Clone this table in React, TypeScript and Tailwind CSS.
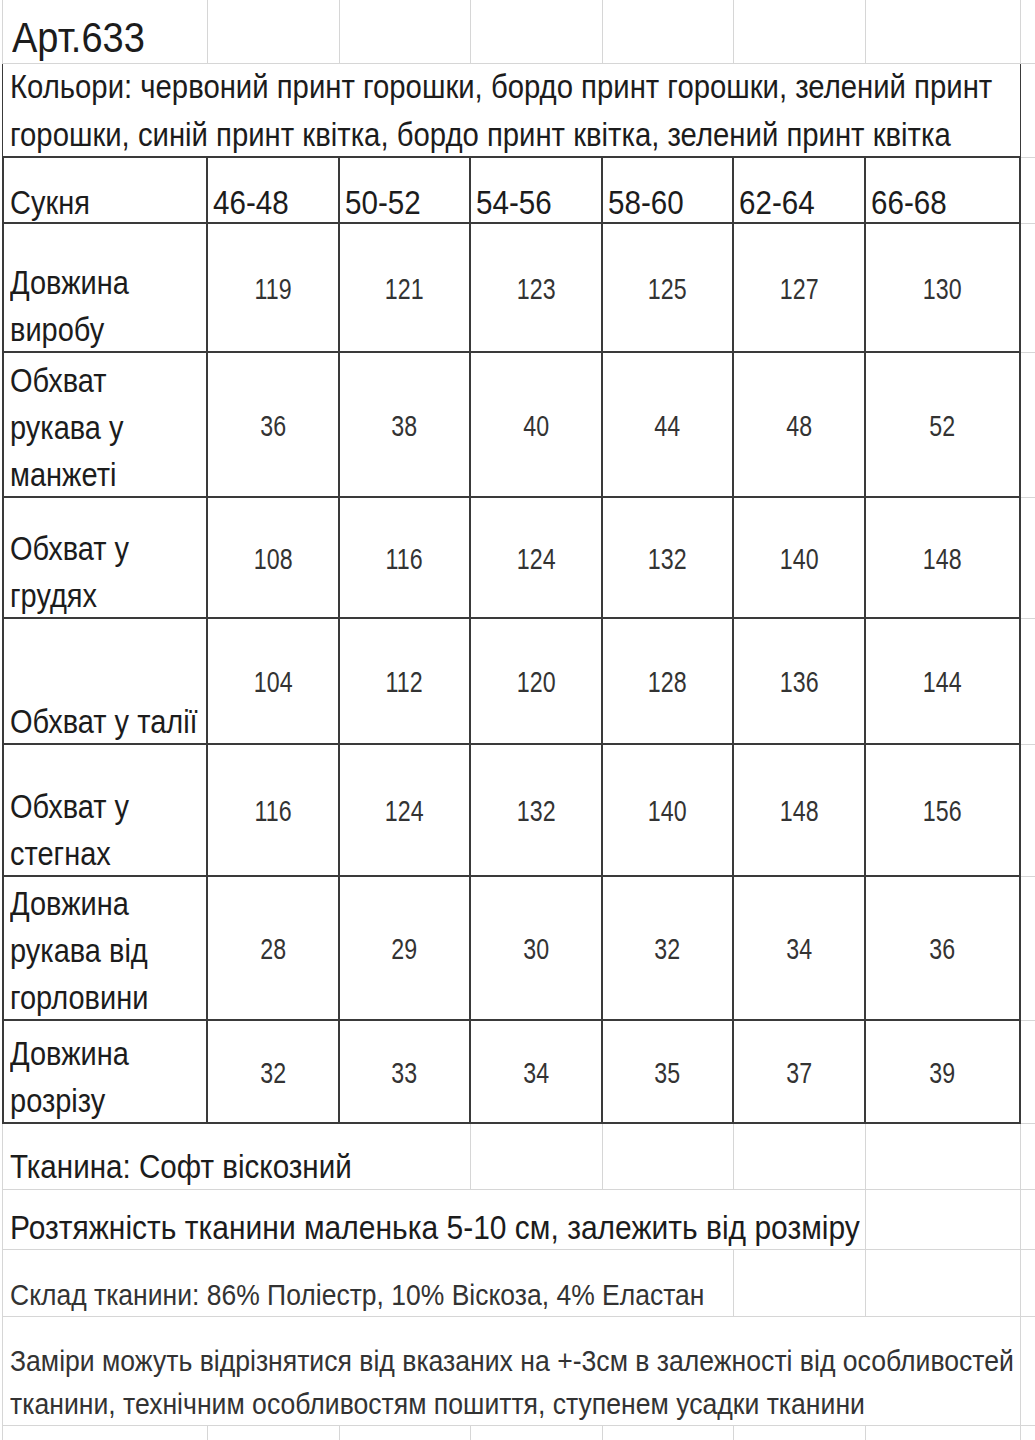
const COLS = ['w-[206px]', 'w-[132px]', 'w-[131px]', 'w-[132px]', 'w-[131px]', 'w-[132px]', 'w-[155px]'];
const SIZES = ['46-48', '50-52', '54-56', '58-60', '62-64', '66-68'];

const ROWS: { label: string[]; h: string; vals: number[] }[] = [
  { label: ['Довжина', 'виробу'], h: 'h-[129px]', vals: [119, 121, 123, 125, 127, 130] },
  { label: ['Обхват', 'рукава у', 'манжеті'], h: 'h-[145px]', vals: [36, 38, 40, 44, 48, 52] },
  { label: ['Обхват у', 'грудях'], h: 'h-[121px]', vals: [108, 116, 124, 132, 140, 148] },
  { label: ['Обхват у талії'], h: 'h-[126px]', vals: [104, 112, 120, 128, 136, 144] },
  { label: ['Обхват у', 'стегнах'], h: 'h-[132px]', vals: [116, 124, 132, 140, 148, 156] },
  { label: ['Довжина', 'рукава від', 'горловини'], h: 'h-[144px]', vals: [28, 29, 30, 32, 34, 36] },
  { label: ['Довжина', 'розрізу'], h: 'h-[103px]', vals: [32, 33, 34, 35, 37, 39] },
];

const gray = 'border-[#d6d6d6]';
const dark = 'border-[#3a3a3a]';

function T({ children }: { children: React.ReactNode }) {
  return <span className="inline-block origin-[50%_70%] scale-y-112">{children}</span>;
}

function Pad() {
  return <div className={`min-w-0 flex-1 border-b ${gray}`} />;
}

function Blank({ w }: { w: string }) {
  return <div className={`${w} shrink-0 border-b border-r ${gray}`} />;
}

export default function App() {
  return (
    <div className="w-[1035px] overflow-hidden bg-white pl-[2px] font-['Liberation_Sans',Arial,sans-serif] text-[29px] text-[#1c1c1c]">
      {/* Арт */}
      <div className="flex h-[64px]">
        <div className={`${COLS[0]} shrink-0 whitespace-nowrap border-b border-l border-r ${gray} flex items-end pl-[9px]`}>
          <span className="text-[38px] leading-[48px]">
            <T>Арт.633</T>
          </span>
        </div>
        {COLS.slice(1).map((w, i) => (
          <Blank key={i} w={w} />
        ))}
        <Pad />
      </div>

      {/* Кольори */}
      <div className="flex h-[94px]">
        <div className={`w-[1019px] shrink-0 whitespace-nowrap border-b-2 border-l border-r ${dark} flex items-end pl-[7px] text-[29.3px] leading-[48px]`}>
          <div className="-mb-[4px]">
            <div>
              <T>Кольори: червоний принт горошки, бордо принт горошки, зелений принт</T>
            </div>
            <div>
              <T>горошки, синій принт квітка, бордо принт квітка, зелений принт квітка</T>
            </div>
          </div>
        </div>
        <Pad />
      </div>

      {/* Сукня */}
      <div className="flex h-[66px] leading-[36px]">
        <div className={`${COLS[0]} shrink-0 border-b-2 border-l-2 border-r-2 ${dark} flex items-end pl-[6px]`}>
          <T>Сукня</T>
        </div>
        {SIZES.map((s, i) => (
          <div key={s} className={`${COLS[i + 1]} shrink-0 border-b-2 border-r-2 ${dark} flex items-end pl-[5px] text-[29.6px]`}>
            <T>{s}</T>
          </div>
        ))}
        <Pad />
      </div>

      {ROWS.map((r) => (
        <div key={r.label.join(' ')} className={`flex ${r.h}`}>
          <div className={`${COLS[0]} shrink-0 border-b-2 border-l-2 border-r-2 ${dark} flex items-end whitespace-nowrap pl-[6px] leading-[47px]`}>
            <div className="-mb-[4px]">
              {r.label.map((l) => (
                <div key={l}>
                  <T>{l}</T>
                </div>
              ))}
            </div>
          </div>
          {r.vals.map((v, i) => (
            <div key={i} className={`${COLS[i + 1]} shrink-0 border-b-2 border-r-2 ${dark} flex items-center justify-center pt-[4px] text-[#333]`}>
              <span className="inline-block scale-x-80">{v}</span>
            </div>
          ))}
          <Pad />
        </div>
      ))}

      {/* Тканина */}
      <div className="flex h-[66px]">
        <div className={`w-[469px] shrink-0 whitespace-nowrap border-b border-l border-r ${gray} flex items-end pb-[1px] pl-[7px] text-[29.6px] leading-[40px]`}>
          <T>Тканина: Софт віскозний</T>
        </div>
        {COLS.slice(3).map((w, i) => (
          <Blank key={i} w={w} />
        ))}
        <Pad />
      </div>

      {/* Розтяжність */}
      <div className="flex h-[60px]">
        <div className={`w-[732px] shrink-0 whitespace-nowrap border-b border-l ${gray} flex items-end pl-[7px] text-[30px] leading-[40px]`}>
          <T>Розтяжність тканини маленька 5-10 см, залежить від розміру</T>
        </div>
        <div className={`w-[132px] shrink-0 border-b border-r ${gray}`} />
        <Blank w={COLS[6]} />
        <Pad />
      </div>

      {/* Склад */}
      <div className="flex h-[67px]">
        <div className={`w-[601px] shrink-0 whitespace-nowrap border-b border-l ${gray} flex items-end pl-[7px] text-[26.5px] leading-[40px] text-[#333]`}>
          <T>Склад тканини: 86% Поліестр, 10% Віскоза, 4% Еластан</T>
        </div>
        <div className={`w-[131px] shrink-0 border-b border-r ${gray}`} />
        <Blank w={COLS[5]} />
        <Blank w={COLS[6]} />
        <Pad />
      </div>

      {/* Заміри */}
      <div className="flex h-[109px]">
        <div className={`w-[1019px] shrink-0 whitespace-nowrap border-b border-l border-r ${gray} flex items-end pl-[7px] text-[26.6px] leading-[43px] text-[#333]`}>
          <div className="-mb-[2px]">
            <div>
              <T>Заміри можуть відрізнятися від вказаних на +-3см в залежності від особливостей</T>
            </div>
            <div>
              <T>тканини, технічним особливостям пошиття, ступенем усадки тканини</T>
            </div>
          </div>
        </div>
        <Pad />
      </div>

      <div className="flex h-[40px]">
        {COLS.map((w, i) => (
          <div key={i} className={`${w} shrink-0 border-r ${gray} ${i === 0 ? 'border-l' : ''}`} />
        ))}
        <div className="flex-1" />
      </div>
    </div>
  );
}
